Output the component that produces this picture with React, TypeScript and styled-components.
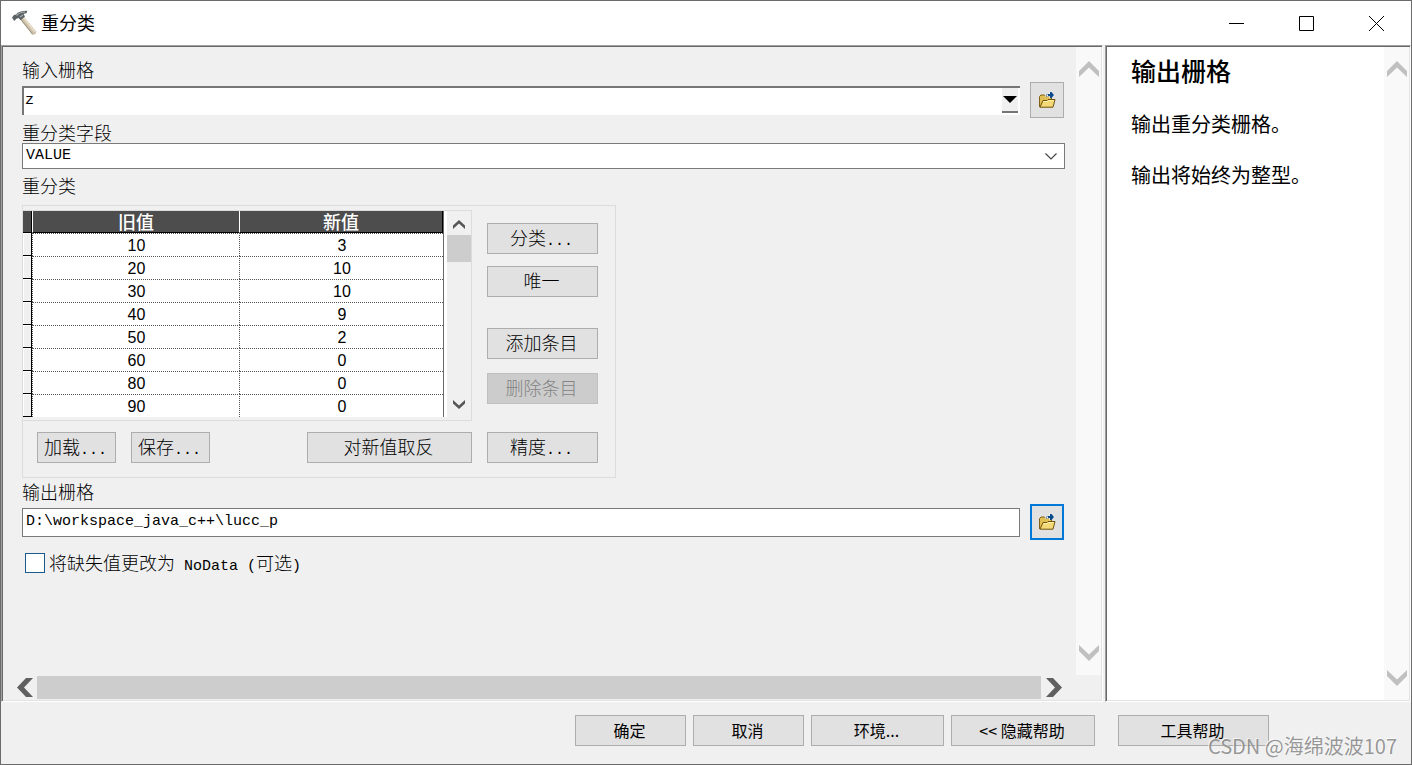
import React from "react";
import styled, { createGlobalStyle, css } from "styled-components";

const sans = `"Liberation Sans", "Noto Sans CJK SC", sans-serif`;
const cjk = `"Noto Sans CJK SC", sans-serif`;
const mono = `"Liberation Mono", "Noto Sans CJK SC", monospace`;

const GlobalStyle = createGlobalStyle`
  *, *::before, *::after { box-sizing: border-box; }
  body { margin: 0; background: #f0f0f0; color: #000; font-family: ${cjk}; }
  button, input, select { font: inherit; color: inherit; margin: 0; border-radius: 0; }
  svg { display: block; }
`;

const Window = styled.div`
  display: flex;
  flex-direction: column;
  min-height: 100vh;
  border: 1px solid #6b6b6b;
  background: #f0f0f0;
  position: relative;
`;

const TitleBar = styled.header`
  display: flex;
  align-items: center;
  height: 44px;
  padding-left: 10px;
  background: #fff;
`;

const Title = styled.h1`
  flex: 1;
  margin: 0 0 0 4px;
  padding-bottom: 2px;
  font-size: 18px;
  font-weight: 400;
  line-height: 24px;
`;

const CaptionButton = styled.button`
  display: grid;
  place-items: center;
  width: 70px;
  height: 44px;
  padding: 0;
  border: 0;
  background: transparent;
`;

const Panes = styled.main`
  flex: 1;
  display: flex;
  gap: 2px;
`;

const sunken = css`
  border: 1px solid;
  border-color: #a0a0a0 #fff #fff #a0a0a0;
  box-shadow: inset 1px 1px 0 #696969, inset -1px -1px 0 #e3e3e3;
  padding: 1px;
`;

const FormPane = styled.section`
  ${sunken}
  flex: 1;
  min-width: 0;
  display: flex;
  flex-direction: column;
`;

const FormArea = styled.div`
  flex: 1;
  display: flex;
`;

const Form = styled.form`
  flex: 1;
  min-width: 0;
  padding: 13px 11px 0 19px;
  font-size: 18px;
  font-weight: 300;
  line-height: 20px;
`;

const HelpPane = styled.aside`
  ${sunken}
  width: 306px;
  display: flex;
  background: #fff;
`;

const HelpText = styled.article`
  flex: 1;
  padding: 8px 0 0 24px;
  font-size: 20px;
  line-height: 30px;

  h2 { margin: 0 0 24px; font-size: 25px; line-height: 30px; font-weight: 500; }
  p { margin: 0 0 21px; }
`;

const VScroll = styled.div`
  display: flex;
  flex-direction: column;
  justify-content: space-between;
  align-items: center;
  width: 25px;
  padding: 14px 0;
  background: #f9f9f9;
`;

const HScroll = styled.div`
  display: flex;
  align-items: center;
  height: 25px;
  padding: 0 39px 0 14px;
`;

const HThumb = styled.div`
  flex: 1;
  height: 23px;
  margin: 0 5px 0 4px;
  background: #cdcdcd;
`;

const ArrowButton = styled.button`
  padding: 0;
  border: 0;
  background: transparent;
`;

const Label = styled.label`
  display: block;
  line-height: 18px;
  padding-bottom: 2px;
`;

const GroupLabel = styled.div`
  margin: 7px 0 9px;
  line-height: 18px;
  padding-bottom: 2px;
`;

const FieldRow = styled.div`
  display: flex;
  align-items: center;
  gap: 10px;
  height: 36px;
  margin: 2px 1px 5px 0;
`;

const Combo = styled.div`
  flex: 1;
  display: flex;
  height: 29px;
  padding-right: 2px;
  border-top: 2px solid #767676;
  border-left: 2px solid #767676;
  background: #fff;
`;

const ComboInput = styled.input`
  flex: 1;
  min-width: 0;
  padding: 0 0 1px 1px;
  border: 0;
  outline: 0;
  background: #fff;
  font-family: ${mono};
  font-size: 15px;
`;

const ComboArrow = styled.button`
  display: grid;
  place-items: center;
  width: 16px;
  height: 25px;
  padding: 0;
  border: 0;
  border-bottom: 2px solid #767676;
  background: #f0f0f0;
`;

const TextBox = styled.input`
  flex: 1;
  min-width: 0;
  height: 29px;
  padding: 0 3px 2px 3px;
  border: 1px solid #7a7a7a;
  outline: 0;
  background: #fff;
  font-family: ${mono};
  font-size: 15px;
`;

const SelectWrap = styled.div`
  position: relative;
`;

const Select = styled.select`
  display: block;
  width: 100%;
  height: 26px;
  padding: 0 3px;
  appearance: none;
  border: 1px solid #7a7a7a;
  background: #fff;
  font-family: ${mono};
  font-size: 15px;
`;

const SelectMark = styled.span`
  position: absolute;
  right: 8px;
  top: 10px;
  pointer-events: none;
`;

const BrowseButton = styled.button<{ $focused?: boolean }>`
  display: grid;
  place-items: center;
  width: 34px;
  height: 36px;
  padding: 0;
  border: ${(p) => (p.$focused ? "2px solid #0078d7" : "1px solid #adadad")};
  background: #e1e1e1;
`;

const Button = styled.button<{ $w: number }>`
  width: ${(p) => p.$w}px;
  height: 31px;
  padding: 0 2px 4px 0;
  border: 1px solid #adadad;
  background: #e1e1e1;
  line-height: 20px;
  white-space: nowrap;

  &:disabled { border-color: #bfbfbf; background: #ccc; color: #838383; }
`;

const Mono = styled.span`
  font-family: ${mono};
  font-size: 15px;
  line-height: 1px;
  white-space: pre;
`;

const Group = styled.div`
  display: flex;
  width: 594px;
  margin-bottom: 4px;
  border: 1px solid #dcdcdc;
`;

const GroupMain = styled.div`
  width: 449px;
  padding: 4px 0 14px;
`;

const GroupSide = styled.div`
  display: flex;
  flex-direction: column;
  padding: 17px 0 14px 15px;
`;

const ButtonPair = styled.div<{ $gap: number; $after: number }>`
  display: flex;
  flex-direction: column;
  gap: ${(p) => p.$gap}px;
  margin-bottom: ${(p) => p.$after}px;
`;

const TablePanel = styled.div`
  display: flex;
  height: 211px;
  padding-bottom: 3px;
  border: 1px solid #dcdcdc;
  border-left: 0;
`;

const TableSheet = styled.div`
  width: 424px;
  background: #fff;
`;

const Table = styled.table`
  width: 421px;
  table-layout: fixed;
  border-spacing: 0;
  border-right: 1px solid #696969;
`;

const HeadCell = styled.th<{ $w: number }>`
  width: ${(p) => p.$w}px;
  height: 22px;
  padding: 0;
  border-bottom: 1px solid #000;
  border-right: 1px solid #fff;
  background: #4d4d4d;
  color: #fff;
  font-weight: 500;
  line-height: 21px;

  &:first-child { border-right-color: #000; }
  &:nth-child(2) { border-left: 1px solid #fff; }
  &:last-child { border-right-color: #000; }
`;

const StubCell = styled.th`
  height: 23px;
  padding: 0;
  border-right: 1px solid #000;
  border-bottom: 1px solid #000;
  background: #f0f0f0;
  box-shadow: inset 1px 1px 0 #fff;
`;

const Cell = styled.td`
  height: 23px;
  padding: 1px 0 0 1px;
  border-top: 1px dotted #555;
  font-family: ${sans};
  font-size: 16px;
  font-weight: 400;
  line-height: 21px;
  text-align: center;

  &:nth-child(2) { border-left: 1px dotted #555; border-right: 1px dotted #555; }
`;

const TableScroll = styled.div`
  display: flex;
  flex-direction: column;
  align-items: center;
  width: 24px;
  padding: 9px 0 8px;
`;

const TableThumb = styled.div`
  width: 24px;
  height: 27px;
  margin: 6px 0 auto;
  background: #cdcdcd;
`;

const ActionRow = styled.div`
  display: flex;
  gap: 15px;
  margin-top: 11px;
  padding-left: 14px;

  button:last-child { margin-left: auto; }
`;

const CheckRow = styled.label`
  display: flex;
  align-items: center;
  gap: 4px;
  margin: 12px 0 0 3px;

  span:last-of-type { padding-bottom: 2px; }
`;

const CheckText = styled.span`
  padding-bottom: 2px;
`;

const CheckBox = styled.input`
  appearance: none;
  width: 20px;
  height: 20px;
  border: 1px solid #1b5a8f;
  background: #fff;
`;

const Footer = styled.footer`
  display: flex;
  justify-content: flex-end;
  gap: 7px;
  height: 62px;
  padding: 13px 142px 0 0;
  font-size: 16px;
  font-family: ${cjk};

  button { padding-bottom: 2px; }
  button:last-child { margin-left: 16px; }
`;

const Watermark = styled.div`
  position: absolute;
  right: 14px;
  bottom: 3px;
  font-size: 20px;
  line-height: 30px;
  color: rgba(120, 120, 120, 0.75);
  text-shadow: -1px -1px 0 rgba(255, 255, 255, 0.7);
  pointer-events: none;
`;

const bigArrow = {
  up: { w: 20, h: 16, d: "M0 10L10 0L20 10V16L10 6.5L0 16Z" },
  down: { w: 20, h: 16, d: "M0 0L10 9.5L20 0V6L10 16L0 6Z" },
  left: { w: 16, h: 19, d: "M0 9.5L9 0H16L7 9.5L16 19H9Z" },
  right: { w: 16, h: 19, d: "M16 9.5L7 0H0L9 9.5L0 19H7Z" },
};

function Arrow({ dir, color, label }: { dir: keyof typeof bigArrow; color: string; label: string }) {
  const a = bigArrow[dir];
  return (
    <ArrowButton type="button" aria-label={label}>
      <svg width={a.w} height={a.h}><path d={a.d} fill={color} /></svg>
    </ArrowButton>
  );
}

function SmallArrow({ down }: { down?: boolean }) {
  return (
    <ArrowButton type="button" aria-label={down ? "向下滚动" : "向上滚动"}>
      <svg width="12" height="9">
        <path d={down ? "M0 0L6 5.5L12 0V3.5L6 9L0 3.5Z" : "M0 9L6 3.5L12 9V5.5L6 0L0 5.5Z"} fill="#555" />
      </svg>
    </ArrowButton>
  );
}

function Hammer() {
  return (
    <svg width="26" height="26" viewBox="0 0 26 26" aria-hidden="true">
      <path d="M9 9L12.5 6.3L25.2 21.5Q25.2 24.7 21.5 24.7Z" fill="#cbbfa9" />
      <path d="M9.5 9L21.5 24.2" stroke="#978d7c" fill="none" />
      <path d="M12.5 7.8L24 22" stroke="#e9dfcc" strokeWidth="1.6" fill="none" />
      <path d="M1 7.5L3 5L5 4.5Q8 .6 16.2 .8L15.7 3L12.5 4L14 6.5L9.5 10.3L7.5 8L5.5 8.8L3.2 11Z" fill="#5c6163" />
      <path d="M5.5 5.5Q9 2 14 2M9 7L12 5" stroke="#a9afb1" strokeWidth="1.2" fill="none" />
    </svg>
  );
}

function FolderIcon() {
  return (
    <svg width="17" height="16" viewBox="0 0 17 16" aria-hidden="true">
      <path d="M.5 15V4.5L2 3H5.5L7 4.5H12.5V8" fill="#e0bf55" stroke="#806014" />
      <path d="M1 15.2L4 8.5H8L9 7.5H16L14 15.2Z" fill="#f3d977" stroke="#71520c" />
      <path d="M4.5 9.5H8.5L9.5 8.5H14.5" stroke="#fff2ae" fill="none" />
      <path d="M6.5 5V2H10.5V-.5L15.5 3L10.5 6.5V4.5H8.5" fill="#fff" />
      <path d="M11 0H12.5L15 3L12.5 6H11V4H9V2H11Z" fill="#0b4a8c" />
      <path d="M7.5 2.5H8.5M7.5 4.5V3.5" stroke="#0b4a8c" fill="none" />
    </svg>
  );
}

const rows: [number, number][] = [[10, 3], [20, 10], [30, 10], [40, 9], [50, 2], [60, 0], [80, 0], [90, 0]];

export default function App() {
  return (
    <>
      <GlobalStyle />
      <Window>
        <TitleBar>
          <Hammer />
          <Title>重分类</Title>
          <CaptionButton type="button" aria-label="最小化">
            <svg width="15" height="15"><path d="M0 7.5H15" stroke="#000" /></svg>
          </CaptionButton>
          <CaptionButton type="button" aria-label="最大化">
            <svg width="15" height="15"><path d="M.5 .5H14.5V14.5H.5Z" stroke="#000" fill="none" /></svg>
          </CaptionButton>
          <CaptionButton type="button" aria-label="关闭">
            <svg width="15" height="15"><path d="M0 0L15 15M15 0L0 15" stroke="#000" /></svg>
          </CaptionButton>
        </TitleBar>

        <Panes>
          <FormPane>
            <FormArea>
              <Form>
                <Label htmlFor="in">输入栅格</Label>
                <FieldRow>
                  <Combo>
                    <ComboInput id="in" defaultValue="z" />
                    <ComboArrow type="button" aria-label="展开列表">
                      <svg width="14" height="7"><path d="M0 0H14L7 7Z" fill="#000" /></svg>
                    </ComboArrow>
                  </Combo>
                  <BrowseButton type="button" aria-label="浏览输入栅格"><FolderIcon /></BrowseButton>
                </FieldRow>

                <Label htmlFor="field">重分类字段</Label>
                <SelectWrap>
                  <Select id="field" defaultValue="VALUE"><option>VALUE</option></Select>
                  <SelectMark>
                    <svg width="12" height="7"><path d="M.5 .5L6 6L11.5 .5" stroke="#444" strokeWidth="1.2" fill="none" /></svg>
                  </SelectMark>
                </SelectWrap>

                <GroupLabel id="remap">重分类</GroupLabel>
                <Group role="group" aria-labelledby="remap">
                  <GroupMain>
                    <TablePanel>
                      <TableSheet>
                        <Table>
                          <thead>
                            <tr>
                              <HeadCell $w={9} />
                              <HeadCell $w={208} scope="col">旧值</HeadCell>
                              <HeadCell $w={203} scope="col">新值</HeadCell>
                            </tr>
                          </thead>
                          <tbody>
                            {rows.map(([from, to]) => (
                              <tr key={from}>
                                <StubCell scope="row" />
                                <Cell>{from}</Cell>
                                <Cell>{to}</Cell>
                              </tr>
                            ))}
                          </tbody>
                        </Table>
                      </TableSheet>
                      <TableScroll>
                        <SmallArrow />
                        <TableThumb />
                        <SmallArrow down />
                      </TableScroll>
                    </TablePanel>
                    <ActionRow>
                      <Button type="button" $w={79}>加载<Mono>...</Mono></Button>
                      <Button type="button" $w={79}>保存<Mono>...</Mono></Button>
                      <Button type="button" $w={165}>对新值取反</Button>
                    </ActionRow>
                  </GroupMain>
                  <GroupSide>
                    <ButtonPair $gap={12} $after={31}>
                      <Button type="button" $w={111}>分类<Mono>...</Mono></Button>
                      <Button type="button" $w={111}>唯一</Button>
                    </ButtonPair>
                    <ButtonPair $gap={14} $after={28}>
                      <Button type="button" $w={111}>添加条目</Button>
                      <Button type="button" $w={111} disabled>删除条目</Button>
                    </ButtonPair>
                    <Button type="button" $w={111}>精度<Mono>...</Mono></Button>
                  </GroupSide>
                </Group>

                <Label htmlFor="out">输出栅格</Label>
                <FieldRow>
                  <TextBox id="out" defaultValue="D:\workspace_java_c++\lucc_p" />
                  <BrowseButton type="button" $focused aria-label="浏览输出栅格"><FolderIcon /></BrowseButton>
                </FieldRow>

                <CheckRow>
                  <CheckBox type="checkbox" />
                  <CheckText>将缺失值更改为<Mono> NoData (</Mono>可选<Mono>)</Mono></CheckText>
                </CheckRow>
              </Form>
              <VScroll>
                <Arrow dir="up" color="#c0c0c0" label="向上滚动" />
                <Arrow dir="down" color="#c0c0c0" label="向下滚动" />
              </VScroll>
            </FormArea>
            <HScroll>
              <Arrow dir="left" color="#606060" label="向左滚动" />
              <HThumb />
              <Arrow dir="right" color="#606060" label="向右滚动" />
            </HScroll>
          </FormPane>

          <HelpPane>
            <HelpText>
              <h2>输出栅格</h2>
              <p>输出重分类栅格。</p>
              <p>输出将始终为整型。</p>
            </HelpText>
            <VScroll>
              <Arrow dir="up" color="#c0c0c0" label="向上滚动" />
              <Arrow dir="down" color="#c0c0c0" label="向下滚动" />
            </VScroll>
          </HelpPane>
        </Panes>

        <Footer>
          <Button type="button" $w={111}>确定</Button>
          <Button type="button" $w={111}>取消</Button>
          <Button type="button" $w={133}>环境...</Button>
          <Button type="button" $w={144}>&lt;&lt; 隐藏帮助</Button>
          <Button type="button" $w={151}>工具帮助</Button>
        </Footer>
        <Watermark>CSDN @海绵波波107</Watermark>
      </Window>
    </>
  );
}
